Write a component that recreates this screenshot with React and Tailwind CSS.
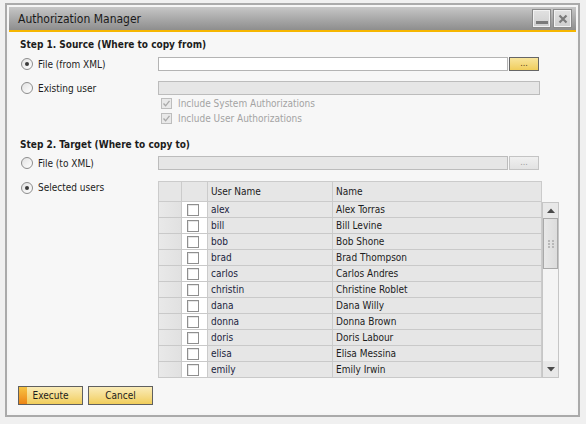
import React from "react";

const users = [
  ["alex", "Alex Torras"],
  ["bill", "Bill Levine"],
  ["bob", "Bob Shone"],
  ["brad", "Brad Thompson"],
  ["carlos", "Carlos Andres"],
  ["christin", "Christine Roblet"],
  ["dana", "Dana Willy"],
  ["donna", "Donna Brown"],
  ["doris", "Doris Labour"],
  ["elisa", "Elisa Messina"],
  ["emily", "Emily Irwin"],
];

const Radio = ({ checked }) => (
  <span className="w-[12px] h-[12px] shrink-0 rounded-full border border-[#8d8d8d] bg-gradient-to-br from-[#e2e2e2] to-white flex items-center justify-center">
    {checked && <span className="w-[4px] h-[4px] rounded-full bg-[#3a3a3a]" />}
  </span>
);

const DisabledCheck = ({ label }) => (
  <div className="h-[15px] flex items-center gap-[6px] pl-[3px]">
    <span className="w-[11px] h-[11px] border border-[#bdbdbd] bg-[#e9e9e9] flex items-center justify-center">
      <svg width="9" height="9" viewBox="0 0 9 9">
        <path d="M1.5 4.5 L3.6 6.8 L7.5 1.8" fill="none" stroke="#a9a9a9" strokeWidth="1.3" />
      </svg>
    </span>
    <span className="text-[#a3a3a3]">{label}</span>
  </div>
);

const YellowButton = ({ children, accent }) => (
  <button className="relative w-[65px] h-[19px] border border-[#606060] bg-gradient-to-b from-[#faecb8] to-[#f1cd58] flex items-center justify-center text-[#1c1c1c]">
    {accent && (
      <span className="absolute left-0 top-0 bottom-0 w-[8px] bg-gradient-to-b from-[#f6c443] to-[#ec8412]" />
    )}
    {children}
  </button>
);

const App = () => {
  return (
    <div className="w-[586px] h-[424px] bg-[#f0f0f0] pt-[3px] pl-[5px] font-['DejaVu_Sans_Condensed','Liberation_Sans',sans-serif] text-[10px] text-[#1c1c1c]">
      <div className="w-[575px] h-[414px] border-2 border-[#aaaaaa] bg-[#f5f5f5] p-[2px] flex flex-col">
        {/* title bar */}
        <div className="h-[25px] shrink-0 border-b-2 border-[#f6b600] bg-gradient-to-b from-[#c6c6c6] to-[#8e8e8e] flex items-center pl-[9px] pr-[4px]">
          <span className="flex-1 text-[12px] text-[#1a1a1a]">Authorization Manager</span>
          <div className="flex gap-[2px]">
            <div className="w-[19px] h-[19px] border border-[#8a8a8a] bg-gradient-to-b from-[#e2e2e2] to-[#cdcdcd] shadow-[inset_0_0_0_1px_#f2f2f2] flex items-end justify-center pb-[3px]">
              <span className="w-[12px] h-[3px] bg-[#7a7a7a]" />
            </div>
            <div className="w-[19px] h-[19px] border border-[#8a8a8a] bg-gradient-to-b from-[#e2e2e2] to-[#cdcdcd] shadow-[inset_0_0_0_1px_#f2f2f2] flex items-center justify-center">
              <svg width="10" height="10" viewBox="0 0 10 10">
                <path d="M1.5 1.5 L8.5 8.5 M8.5 1.5 L1.5 8.5" stroke="#7a7a7a" strokeWidth="2.2" />
              </svg>
            </div>
          </div>
        </div>

        {/* content */}
        <div className="flex-1 bg-[#f7f7f7] flex flex-col">
          <div className="mt-[6px] h-[14px] leading-[14px] pl-[11px] font-bold">
            Step 1. Source (Where to copy from)
          </div>

          <div className="mt-[5px] h-[14px] flex">
            <div className="w-[149px] pl-[12px] flex items-center gap-[5px]">
              <Radio checked />
              <span>File (from XML)</span>
            </div>
            <div className="w-[350px] h-[14px] border border-[#b4b4b4] bg-white" />
            <button className="ml-[1px] w-[30px] h-[14px] border border-[#666] bg-gradient-to-b from-[#f8e59c] to-[#f0cd5a] flex items-center justify-center text-[9px] leading-none text-[#5a3a20] pb-[2px]">
              ...
            </button>
          </div>

          <div className="mt-[10px] h-[14px] flex">
            <div className="w-[149px] pl-[12px] flex items-center gap-[5px]">
              <Radio />
              <span>Existing user</span>
            </div>
            <div className="w-[382px] h-[14px] border border-[#bcbcbc] bg-[#e6e6e6]" />
          </div>

          <div className="mt-[1px] ml-[149px]">
            <DisabledCheck label="Include System Authorizations" />
            <DisabledCheck label="Include User Authorizations" />
          </div>

          <div className="mt-[12px] h-[14px] leading-[14px] pl-[11px] font-bold">
            Step 2. Target (Where to copy to)
          </div>

          <div className="mt-[4px] h-[14px] flex">
            <div className="w-[149px] pl-[12px] flex items-center gap-[5px]">
              <Radio />
              <span>File (to XML)</span>
            </div>
            <div className="w-[350px] h-[14px] border border-[#bcbcbc] bg-[#e6e6e6]" />
            <button className="ml-[1px] w-[30px] h-[14px] border border-[#c4c4c4] bg-gradient-to-b from-[#f0f0f0] to-[#e2e2e2] flex items-center justify-center text-[9px] leading-none text-[#9a9a9a] pb-[2px]">
              ...
            </button>
          </div>

          <div className="mt-[11px] flex">
            <div className="w-[149px] pl-[12px] flex items-start gap-[5px] pt-[1px]">
              <Radio checked />
              <span className="leading-[12px]">Selected users</span>
            </div>

            <div className="w-[384px]">
              <div className="flex h-[21px] border-t border-b border-[#cbcbcb] bg-[#e6e6e6]">
                <div className="w-[23px] border-l border-[#cbcbcb]" />
                <div className="w-[26px] border-l border-[#cbcbcb]" />
                <div className="w-[125px] border-l border-[#cbcbcb] pl-[3px] flex items-center">User Name</div>
                <div className="w-[210px] border-l border-r border-[#cbcbcb] pl-[3px] flex items-center">Name</div>
              </div>
              {users.map(([user, name]) => (
                <div key={user} className="flex h-[16px] border-b border-[#c9c9c9]">
                  <div className="w-[23px] border-l border-[#cbcbcb] bg-gradient-to-r from-[#e9e9e9] to-[#e1e1e1]" />
                  <div className="w-[26px] border-l border-[#cbcbcb] bg-white pl-[5px] flex items-center">
                    <span className="w-[12px] h-[12px] border border-[#8f8f8f] bg-white shadow-[inset_1px_1px_0_#e6e6e6]" />
                  </div>
                  <div className="w-[125px] border-l border-[#cbcbcb] bg-[#e6e6e6] pl-[3px] flex items-center text-[#1b2440]">
                    {user}
                  </div>
                  <div className="w-[210px] border-l border-r border-[#cbcbcb] bg-[#e6e6e6] pl-[3px] flex items-center">
                    {name}
                  </div>
                </div>
              ))}
            </div>

            {/* scrollbar */}
            <div className="mt-[21px] w-[17px] h-[176px] border border-[#c6c6c6] bg-[#f4f4f4] flex flex-col">
              <div className="h-[15px] bg-[#e8e8e8] flex items-center justify-center">
                <svg width="8" height="5" viewBox="0 0 8 5">
                  <path d="M0 5 L4 0.5 L8 5 Z" fill="#4a4a4a" />
                </svg>
              </div>
              <div className="h-[51px] border border-[#a9a9a9] bg-gradient-to-r from-[#e8e8e8] to-[#dcdcdc] flex items-center justify-center">
                <div className="grid grid-cols-2 gap-x-[2px] gap-y-[1px]">
                  {[0, 1, 2, 3, 4, 5].map((i) => (
                    <span key={i} className="w-[2px] h-[2px] bg-[#b8b8b8]" />
                  ))}
                </div>
              </div>
              <div className="flex-1" />
              <div className="h-[16px] bg-[#e8e8e8] flex items-center justify-center">
                <svg width="8" height="5" viewBox="0 0 8 5">
                  <path d="M0 0 L8 0 L4 4.5 Z" fill="#4a4a4a" />
                </svg>
              </div>
            </div>
          </div>

          <div className="mt-[8px] pl-[9px] flex gap-[5px]">
            <YellowButton accent>
              <span className="relative">Execute</span>
            </YellowButton>
            <YellowButton>Cancel</YellowButton>
          </div>
        </div>
      </div>
    </div>
  );
};

export default App;
